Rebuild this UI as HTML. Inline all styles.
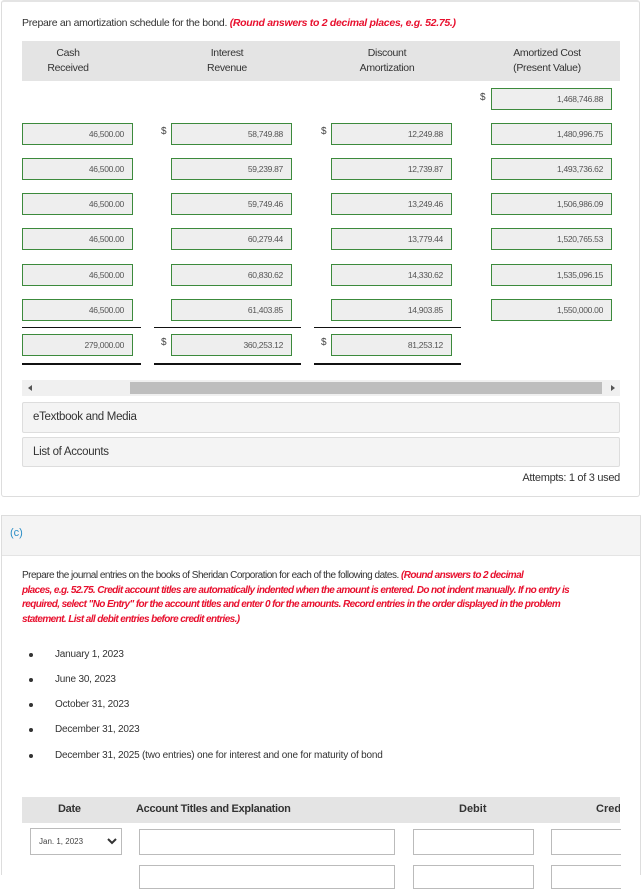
<!DOCTYPE html>
<html><head><meta charset="utf-8"><style>
*{box-sizing:border-box;margin:0;padding:0}
body{width:642px;height:869px;overflow:hidden;background:#fff;font-family:"Liberation Sans",sans-serif;color:#333;position:relative}
.a{position:absolute}
.card{left:1px;top:0;width:639px;height:497px;border:1px solid #ddd;border-top:2px solid #e4e4e4;border-radius:3px}
.t{font-size:10.5px;letter-spacing:-0.3px;white-space:nowrap}
.red{color:#e8102e;font-style:italic;font-weight:bold}
.hd{background:#e4e4e4}
.inp{position:absolute;height:22px;background:#eee;border:1px solid #3c8a3c;font-size:8.5px;color:#555;text-align:right;padding-right:8px;line-height:20px;letter-spacing:-0.3px}
.d{position:absolute;font-size:10px;color:#444}
.ln{position:absolute;height:2px;background:#111}
.box{position:absolute;left:22px;width:598px;background:#f4f4f4;border:1px solid #ddd;border-radius:2px;font-size:11.5px;padding-left:10px;letter-spacing:-0.3px}
.b{position:absolute;left:29px;width:4px;height:4px;border-radius:50%;background:#333}
.bt{position:absolute;left:55px;font-size:10px;letter-spacing:-0.2px}
.w{position:absolute;height:24px;border:1px solid #bbb;background:#fff}
</style></head><body>
<div class="a card"></div>
<div class="a t" style="left:22px;top:17px">Prepare an amortization schedule for the bond. <span class="red">(Round answers to 2 decimal places, e.g. 52.75.)</span></div>
<div class="a hd" style="left:22px;top:41px;width:598px;height:40px"></div>
<div class="a t" style="left:22px;top:46px;width:92px;text-align:center;line-height:15px">Cash<br>Received</div>
<div class="a t" style="left:171px;top:46px;width:112px;text-align:center;line-height:15px">Interest<br>Revenue</div>
<div class="a t" style="left:331px;top:46px;width:112px;text-align:center;line-height:15px">Discount<br>Amortization</div>
<div class="a t" style="left:491px;top:46px;width:112px;text-align:center;line-height:15px">Amortized Cost<br>(Present Value)</div>

<div class="d" style="left:480px;top:92px">$</div>
<div class="inp" style="left:491px;top:88px;width:121px;">1,468,746.88</div>

<div class="d" style="left:161px;top:126px">$</div><div class="d" style="left:321px;top:126px">$</div>
<div class="inp" style="left:22px;top:123px;width:111px">46,500.00</div>
<div class="inp" style="left:171px;top:123px;width:121px">58,749.88</div>
<div class="inp" style="left:331px;top:123px;width:121px">12,249.88</div>
<div class="inp" style="left:491px;top:123px;width:121px">1,480,996.75</div>

<div class="inp" style="left:22px;top:158px;width:111px">46,500.00</div>
<div class="inp" style="left:171px;top:158px;width:121px">59,239.87</div>
<div class="inp" style="left:331px;top:158px;width:121px">12,739.87</div>
<div class="inp" style="left:491px;top:158px;width:121px">1,493,736.62</div>

<div class="inp" style="left:22px;top:193px;width:111px">46,500.00</div>
<div class="inp" style="left:171px;top:193px;width:121px">59,749.46</div>
<div class="inp" style="left:331px;top:193px;width:121px">13,249.46</div>
<div class="inp" style="left:491px;top:193px;width:121px">1,506,986.09</div>

<div class="inp" style="left:22px;top:228px;width:111px">46,500.00</div>
<div class="inp" style="left:171px;top:228px;width:121px">60,279.44</div>
<div class="inp" style="left:331px;top:228px;width:121px">13,779.44</div>
<div class="inp" style="left:491px;top:228px;width:121px">1,520,765.53</div>

<div class="inp" style="left:22px;top:264px;width:111px">46,500.00</div>
<div class="inp" style="left:171px;top:264px;width:121px">60,830.62</div>
<div class="inp" style="left:331px;top:264px;width:121px">14,330.62</div>
<div class="inp" style="left:491px;top:264px;width:121px">1,535,096.15</div>

<div class="inp" style="left:22px;top:299px;width:111px">46,500.00</div>
<div class="inp" style="left:171px;top:299px;width:121px">61,403.85</div>
<div class="inp" style="left:331px;top:299px;width:121px">14,903.85</div>
<div class="inp" style="left:491px;top:299px;width:121px">1,550,000.00</div>

<div class="ln" style="left:22px;top:327px;width:119px;height:1px"></div>
<div class="ln" style="left:154px;top:327px;width:147px;height:1px"></div>
<div class="ln" style="left:314px;top:327px;width:147px;height:1px"></div>

<div class="d" style="left:161px;top:337px">$</div><div class="d" style="left:321px;top:337px">$</div>
<div class="inp" style="left:22px;top:334px;width:111px">279,000.00</div>
<div class="inp" style="left:171px;top:334px;width:121px">360,253.12</div>
<div class="inp" style="left:331px;top:334px;width:121px">81,253.12</div>
<div class="ln" style="left:22px;top:363px;width:119px"></div>
<div class="ln" style="left:154px;top:363px;width:147px"></div>
<div class="ln" style="left:314px;top:363px;width:147px"></div>

<div class="a" style="left:22px;top:380px;width:598px;height:16px;background:#f0f0f0"></div>
<div class="a" style="left:130px;top:382px;width:472px;height:12px;background:#bebebe"></div>
<div class="a" style="left:28px;top:385px;width:0;height:0;border-top:3px solid transparent;border-bottom:3px solid transparent;border-right:4px solid #555"></div>
<div class="a" style="left:611px;top:385px;width:0;height:0;border-top:3px solid transparent;border-bottom:3px solid transparent;border-left:4px solid #555"></div>

<div class="box" style="top:402px;height:31px;line-height:29px">eTextbook and Media</div>
<div class="box" style="top:437px;height:30px;line-height:28px">List of Accounts</div>
<div class="a t" style="right:22px;top:472px;font-size:11px">Attempts: 1 of 3 used</div>

<div class="a" style="left:1px;top:515px;width:640px;height:360px;border:1px solid #ddd;border-bottom:none"></div>
<div class="a" style="left:2px;top:516px;width:638px;height:40px;background:#f4f4f4;border-bottom:1px solid #e4e4e4"></div>
<div class="a" style="left:10px;top:527px;font-size:11px;color:#2b8ec6">(c)</div>

<div class="a" style="left:22px;top:569px;width:620px;font-size:10px;line-height:14.7px;letter-spacing:-0.5px;white-space:nowrap">Prepare the journal entries on the books of Sheridan Corporation for each of the following dates. <span class="red" style="letter-spacing:-0.6px">(Round answers to 2 decimal<br>places, e.g. 52.75. Credit account titles are automatically indented when the amount is entered. Do not indent manually. If no entry is<br>required, select "No Entry" for the account titles and enter 0 for the amounts. Record entries in the order displayed in the problem<br>statement. List all debit entries before credit entries.)</span></div>

<div class="b" style="top:653px"></div><div class="bt" style="top:649px">January 1, 2023</div>
<div class="b" style="top:678px"></div><div class="bt" style="top:674px">June 30, 2023</div>
<div class="b" style="top:703px"></div><div class="bt" style="top:699px">October 31, 2023</div>
<div class="b" style="top:728px"></div><div class="bt" style="top:724px">December 31, 2023</div>
<div class="b" style="top:754px"></div><div class="bt" style="top:750px">December 31, 2025 (two entries) one for interest and one for maturity of bond</div>

<div class="a hd" style="left:22px;top:797px;width:598px;height:26px"></div>
<div class="a" style="left:58px;top:803px;font-size:11px;font-weight:bold;letter-spacing:-0.3px">Date</div>
<div class="a" style="left:136px;top:803px;font-size:11px;font-weight:bold;letter-spacing:-0.3px">Account Titles and Explanation</div>
<div class="a" style="left:459px;top:803px;font-size:11px;font-weight:bold">Debit</div>
<div class="a" style="left:596px;top:803px;font-size:11px;font-weight:bold;width:24px;overflow:hidden">Credit</div>

<div class="w" style="left:30px;top:828px;width:92px;height:27px;font-size:8px;line-height:25px;padding-left:8px;color:#444">Jan. 1, 2023</div>
<svg class="a" style="left:107px;top:837px" width="10" height="8"><path d="M1 2 L5 6 L9 2" stroke="#333" stroke-width="2" fill="none"/></svg>
<div class="w" style="left:139px;top:829px;width:256px;height:26px"></div>
<div class="w" style="left:413px;top:829px;width:121px;height:26px"></div>
<div class="w" style="left:551px;top:829px;width:70px;height:26px;border-right:none"></div>
<div class="w" style="left:139px;top:865px;width:256px"></div>
<div class="w" style="left:413px;top:865px;width:121px"></div>
<div class="w" style="left:551px;top:865px;width:70px;border-right:none"></div>
</body></html>
